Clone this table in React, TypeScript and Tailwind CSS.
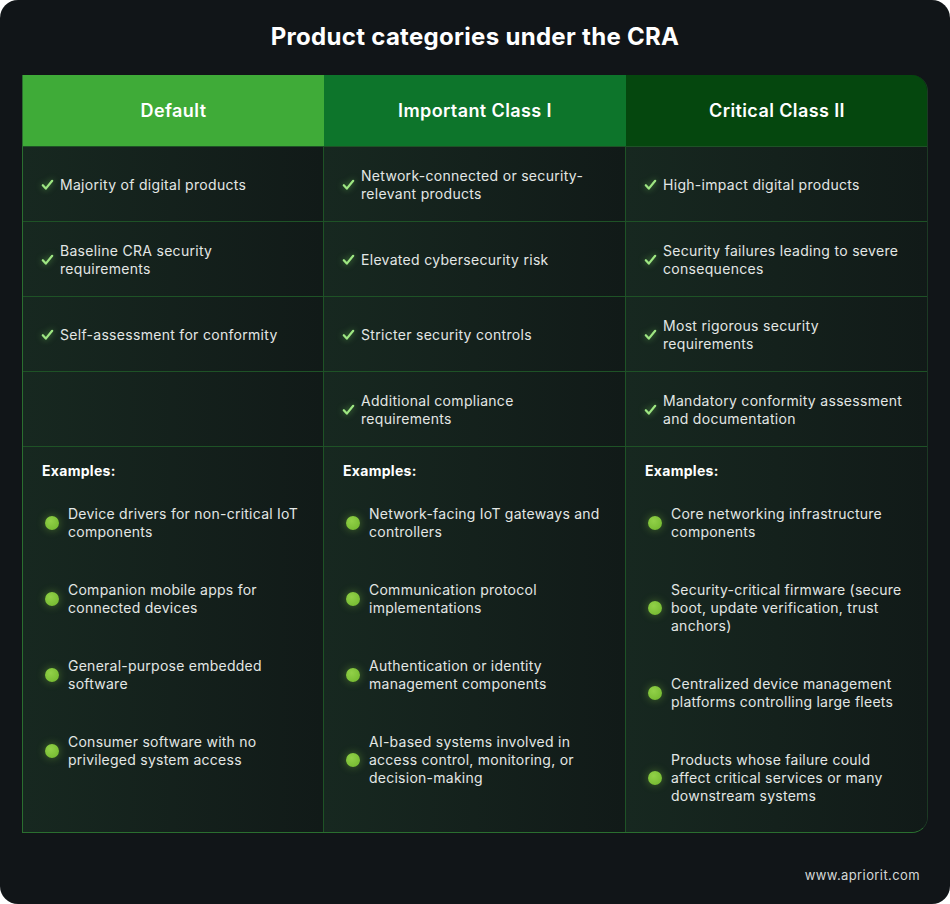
import React from "react";

const font = { fontFamily: "Inter, 'Noto Sans', sans-serif" };

const rows: (string[] | null)[][] = [
  [["Majority of digital products"], ["Network-connected or security-", "relevant products"], ["High-impact digital products"]],
  [["Baseline CRA security", "requirements"], ["Elevated cybersecurity risk"], ["Security failures leading to severe", "consequences"]],
  [["Self-assessment for conformity"], ["Stricter security controls"], ["Most rigorous security", "requirements"]],
  [null, ["Additional compliance", "requirements"], ["Mandatory conformity assessment", "and documentation"]],
];

const examples: string[][][] = [
  [
    ["Device drivers for non-critical IoT", "components"],
    ["Companion mobile apps for", "connected devices"],
    ["General-purpose embedded", "software"],
    ["Consumer software with no", "privileged system access"],
  ],
  [
    ["Network-facing IoT gateways and", "controllers"],
    ["Communication protocol", "implementations"],
    ["Authentication or identity", "management components"],
    ["AI-based systems involved in", "access control, monitoring, or", "decision-making"],
  ],
  [
    ["Core networking infrastructure", "components"],
    ["Security-critical firmware (secure", "boot, update verification, trust", "anchors)"],
    ["Centralized device management", "platforms controlling large fleets"],
    ["Products whose failure could", "affect critical services or many", "downstream systems"],
  ],
];

function Check() {
  return (
    <svg width="13" height="12" viewBox="0 0 13 12" className="shrink-0" style={{ filter: "drop-shadow(0 0 3px rgba(120,220,90,0.6))" }}>
      <path d="M1.8 6.2 L4.8 9.6 L11.2 1.8" fill="none" stroke="#9ee682" strokeWidth="2.2" strokeLinecap="round" strokeLinejoin="round" />
    </svg>
  );
}

function Dot() {
  return (
    <div className="w-[14px] h-[14px] rounded-full shrink-0 bg-[radial-gradient(circle_at_40%_35%,#92d148,#6fb52c)] shadow-[0_0_8px_rgba(130,200,60,0.45)]" />
  );
}

const cellBg = "bg-gradient-to-r from-[#172820] to-[#111a18]";

export default function App() {
  return (
    <div className="bg-white w-[950px] h-[904px]" style={font}>
      <div className="w-[950px] h-[904px] rounded-[18px] bg-[#111518] flex flex-col">
        <div className="h-[75px] flex items-center justify-center pb-[2px]">
          <h1 className="text-[24px] font-bold text-white tracking-[0.3px]">Product categories under the CRA</h1>
        </div>
        <div className="mx-[22px] w-[906px] rounded-tr-[16px] rounded-br-[16px] overflow-hidden border-l border-b border-[#2a6e2f] border-r border-r-[#1c3a24]">
          <div className="grid grid-cols-[301px_302px_302px] h-[72px] border-b border-[#1e5226]">
            <div className="bg-[#3fab38] flex items-center justify-center text-white text-[18px] font-semibold tracking-[0.4px]">Default</div>
            <div className="bg-[#0d752b] flex items-center justify-center text-white text-[18px] font-semibold tracking-[0.4px]">Important Class I</div>
            <div className="bg-[#05470e] flex items-center justify-center text-white text-[18px] font-semibold tracking-[0.4px]">Critical Class II</div>
          </div>
          {rows.map((row, ri) => (
            <div key={ri} className="grid grid-cols-[301px_302px_302px] h-[75px] border-b border-[#1e5226]">
              {row.map((cell, ci) => (
                <div key={ci} className={`${cellBg} flex items-center gap-[6px] pl-[18px] pt-[1px] ${ci < 2 ? "border-r border-[#1e5226]" : ""}`}>
                  {cell && (
                    <>
                      <Check />
                      <div className="text-[14px] leading-[18px] text-[#e3e7e5] whitespace-nowrap tracking-[0.3px]">
                        {cell.map((l, i) => (
                          <div key={i}>{l}</div>
                        ))}
                      </div>
                    </>
                  )}
                </div>
              ))}
            </div>
          ))}
          <div className="grid grid-cols-[301px_302px_302px] h-[385px]">
            {examples.map((col, ci) => (
              <div key={ci} className={`${cellBg} pt-[15px] pl-[19px] ${ci < 2 ? "border-r border-[#1e5226]" : ""}`}>
                <div className="text-[14px] leading-[18px] font-bold text-white tracking-[0.3px]">Examples:</div>
                <div className="flex flex-col gap-[40px] mt-[25px]">
                  {col.map((item, ii) => (
                    <div key={ii} className="flex items-center gap-[9px] pl-[3px]">
                      <Dot />
                      <div className="text-[14px] leading-[18px] text-[#e3e7e5] whitespace-nowrap tracking-[0.25px]">
                        {item.map((l, i) => (
                          <div key={i}>{l}</div>
                        ))}
                      </div>
                    </div>
                  ))}
                </div>
              </div>
            ))}
          </div>
        </div>
        <div className="flex-1 flex items-center justify-end pr-[30px] pt-[14px]">
          <span className="text-[13px] text-[#d5d8d7] tracking-[0.4px]">www.apriorit.com</span>
        </div>
      </div>
    </div>
  );
}
